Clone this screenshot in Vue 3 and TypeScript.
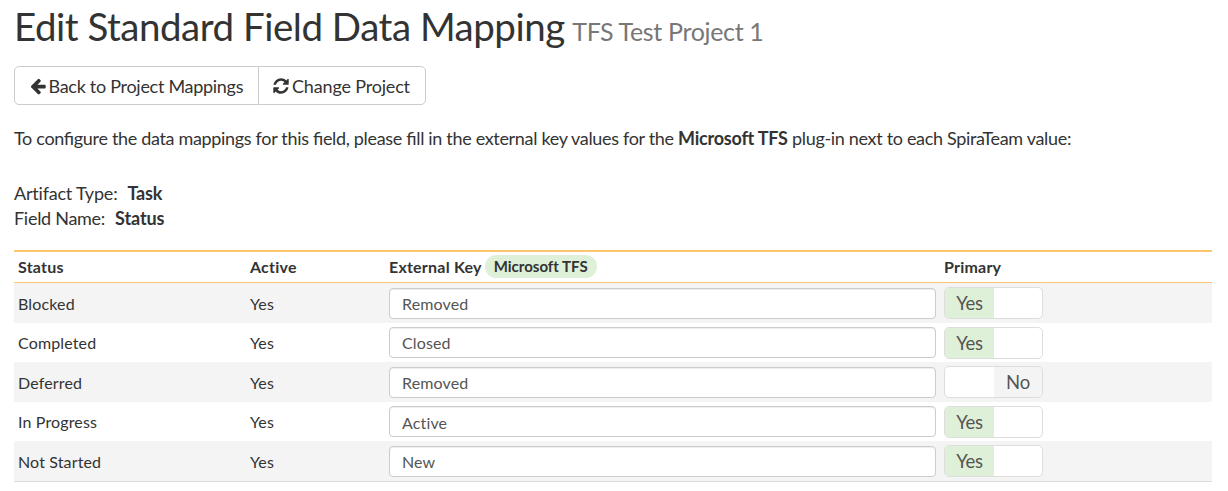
<script setup lang="ts">
interface MappingRow {
  status: string
  active: string
  externalKey: string
  primary: boolean
}

const rows: MappingRow[] = [
  { status: 'Blocked', active: 'Yes', externalKey: 'Removed', primary: true },
  { status: 'Completed', active: 'Yes', externalKey: 'Closed', primary: true },
  { status: 'Deferred', active: 'Yes', externalKey: 'Removed', primary: false },
  { status: 'In Progress', active: 'Yes', externalKey: 'Active', primary: true },
  { status: 'Not Started', active: 'Yes', externalKey: 'New', primary: true },
]
</script>

<template>
  <main class="page">
    <h1 class="title"><span class="title-main">Edit Standard Field Data Mapping</span><small>TFS Test Project 1</small></h1>

    <div class="btn-group">
      <button class="btn back" type="button">
        <svg class="icon" viewBox="128 0 1536 1792" aria-hidden="true">
          <path d="M1664 896v128q0 53-32.5 90.5t-84.5 37.5h-704l293 294q38 36 38 90t-38 90l-75 76q-37 37-90 37-52 0-91-37l-651-652q-37-37-37-90 0-52 37-91l651-650q38-38 91-38 52 0 90 38l75 74q38 38 38 91t-38 91l-293 293h704q52 0 84.5 37.5t32.5 90.5z" />
        </svg>
        <span>Back to Project Mappings</span>
      </button>
      <button class="btn change" type="button">
        <svg class="icon" viewBox="0 0 1536 1792" aria-hidden="true">
          <path d="M1511 1056q0 5-1 7-64 268-268 434.5t-478 166.5q-146 0-282.5-55t-243.5-157l-129 129q-19 19-45 19t-45-19-19-45v-448q0-26 19-45t45-19h448q26 0 45 19t19 45-19 45l-137 137q71 66 161 102t187 36q134 0 250-65t186-179q11-17 53-117 8-23 30-23h192q13 0 22.5 9.5t9.5 22.5zm25-800v448q0 26-19 45t-45 19h-448q-26 0-45-19t-19-45 19-45l138-138q-148-137-349-137-134 0-250 65t-186 179q-11 17-53 117-8 23-30 23h-199q-13 0-22.5-9.5t-9.5-22.5v-7q65-268 270-434.5t480-166.5q146 0 284 55.5t245 156.5l130-129q19-19 45-19t45 19 19 45z" />
        </svg>
        <span>Change Project</span>
      </button>
    </div>

    <p class="intro">To <span class="lig">configure</span> the data mappings for this <span class="lig">field</span>, please <span class="lig">fill</span> in the external key values for the <b>Microsoft TFS</b> plug-in next to each SpiraTeam value:</p>

    <div class="meta">
      <div class="meta-row"><span>Artifact Type:</span><b>Task</b></div>
      <div class="meta-row name"><span>Field Name:</span><b>Status</b></div>
    </div>

    <section class="table">
      <div class="row head">
        <span class="cell">Status</span>
        <span class="cell">Active</span>
        <span class="cell key">External Key<span class="badge">Microsoft TFS</span></span>
        <span class="cell">Primary</span>
      </div>
      <div v-for="row in rows" :key="row.status" class="row body">
        <span class="cell">{{ row.status }}</span>
        <span class="cell">{{ row.active }}</span>
        <input class="field" type="text" :value="row.externalKey" />
        <div class="toggle" :class="{ on: row.primary }">
          <span class="half yes">{{ row.primary ? 'Yes' : '' }}</span>
          <span class="half no">{{ row.primary ? '' : 'No' }}</span>
        </div>
      </div>
    </section>
  </main>
</template>

<style>
html,
body {
  background: #fff;
}
</style>

<style scoped>
.page {
  box-sizing: border-box;
  height: 491px;
  padding: 0 16px 0 14px;
  overflow: hidden;
  font-family: Lato, 'Liberation Sans', sans-serif;
  font-size: 18px;
  font-variant-ligatures: none;
  line-height: 25px;
  color: #333;
}

.title {
  display: flex;
  align-items: baseline;
  gap: 7.5px;
  height: 66px;
  margin: 0;
  font-size: 38.5px;
  font-weight: 400;
  line-height: 53px;
  letter-spacing: -0.48px;
  white-space: nowrap;
}

.title small {
  font-size: 25px;
  letter-spacing: -0.34px;
  color: #777;
}

.btn-group {
  display: flex;
  height: 39px;
}

.btn {
  box-sizing: border-box;
  display: flex;
  align-items: center;
  gap: 3px;
  padding: 1px 0 0 15px;
  border: 1px solid #ccc;
  background: #fff;
  color: #333;
  font: inherit;
  letter-spacing: -0.29px;
  white-space: nowrap;
}

.back {
  width: 245px;
  padding-left: 14.5px;
  border-radius: 5px 0 0 5px;
}

.change {
  width: 168px;
  margin-left: -1px;
  padding-left: 14px;
  border-radius: 0 5px 5px 0;
  letter-spacing: -0.17px;
}

.icon {
  flex: none;
  width: 16px;
  height: 18px;
  fill: currentColor;
}

.intro {
  height: 25px;
  margin: 21px 0 0;
  letter-spacing: -0.325px;
  white-space: nowrap;
}

.intro b {
  letter-spacing: -0.22px;
}

.lig {
  font-feature-settings: 'liga' 1;
}

.meta {
  margin-top: 30px;
  letter-spacing: -0.2px;
}

.meta-row {
  display: flex;
  gap: 10px;
  height: 25px;
}

.name {
  letter-spacing: -0.28px;
}

.name b {
  letter-spacing: -0.1px;
}

.table {
  margin-top: 19px;
  border-top: 2px solid #fdc56d;
  border-bottom: 1px solid #ddd;
  font-size: 16px;
  letter-spacing: 0.14px;
}

.row {
  display: grid;
  grid-template-columns: 232px 139px 555px 1fr;
  padding-left: 4px;
}

.head {
  box-sizing: border-box;
  height: 31px;
  border-bottom: 1px solid #fdc56d;
  font-weight: 700;
  line-height: 29px;
  letter-spacing: 0.22px;
}

.key {
  display: flex;
  align-items: flex-start;
}

.badge {
  height: 23px;
  margin: 3px 0 0 3px;
  padding: 0 9px;
  border-radius: 12px;
  background: #dff0d8;
  font-size: 15px;
  line-height: 23px;
  letter-spacing: 0;
}

.body {
  height: 39.6px;
  line-height: 41px;
}

.body .cell {
  margin-top: -0.4px;
}

.body:nth-child(even) {
  background: #f4f4f4;
}

.field {
  box-sizing: border-box;
  width: 547px;
  height: 31px;
  margin: 4.5px 0 0;
  padding: 1px 12px 0.4px;
  border: 1px solid #ccc;
  border-radius: 4px;
  background: #fff;
  box-shadow: inset 0 1px 1px rgba(0, 0, 0, 0.075);
  color: #555;
  font: inherit;
  letter-spacing: inherit;
  outline: none;
}

.toggle {
  box-sizing: border-box;
  display: flex;
  width: 99px;
  height: 32px;
  margin-top: 4px;
  border: 1px solid #ddd;
  border-radius: 5px;
  overflow: hidden;
  background: #fff;
  color: #555;
  font-size: 18.5px;
  line-height: 30px;
  letter-spacing: -0.2px;
  text-align: center;
}

.half {
  flex: none;
  width: 49px;
}

.no {
  width: 48px;
}

.on .yes {
  background: #dff0d8;
}

.toggle:not(.on) .no {
  background: #f4f4f4;
}
</style>
